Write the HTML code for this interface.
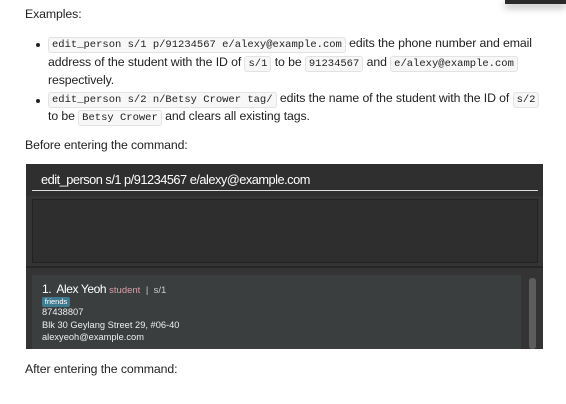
<!DOCTYPE html>
<html><head><style>
body{margin:0;width:566px;height:404px;background:#fff;font-family:"Liberation Sans",sans-serif;position:relative;overflow:hidden;color:#222}
.t{position:absolute;font-size:12.3px;white-space:nowrap;letter-spacing:-0.1px}
code{font-family:"Liberation Mono",monospace;font-size:10.5px;background:#f7f7f7;border:1px solid #e3e3e3;border-radius:3px;padding:1px 3px;color:#222;letter-spacing:0}
.dot{position:absolute;width:4px;height:4px;border-radius:50%;background:#222}
</style></head><body>
<div style="position:absolute;left:505px;top:0;width:61px;height:4px;background:#2a2a2a;box-shadow:0 3px 8px rgba(0,0,0,.4)"></div>
<div class="t" style="left:25px;top:7px">Examples:</div>
<div class="dot" style="left:36px;top:43px"></div>
<div class="t" style="left:48px;top:36px"><code>edit_person s/1 p/91234567 e/alexy@example.com</code> edits the phone number and email</div>
<div class="t" style="left:48px;top:55px">address of the student with the ID of <code>s/1</code> to be <code>91234567</code> and <code>e/alexy@example.com</code></div>
<div class="t" style="left:48px;top:73px">respectively.</div>
<div class="dot" style="left:36px;top:99px"></div>
<div class="t" style="left:48px;top:91px"><code>edit_person s/2 n/Betsy Crower tag/</code> edits the name of the student with the ID of <code>s/2</code></div>
<div class="t" style="left:48px;top:109px">to be <code>Betsy Crower</code> and clears all existing tags.</div>
<div class="t" style="left:25px;top:138px">Before entering the command:</div>

<div style="position:absolute;left:26px;top:164px;width:517px;height:185px;background:#343434"></div>
<div style="position:absolute;left:26px;top:164px;width:517px;height:32px;background:#2f2f2f"></div>
<div class="t" style="left:41px;top:172px;color:#fff;font-size:12.8px;letter-spacing:-0.5px">edit_person s/1 p/91234567 e/alexy@example.com</div>
<div style="position:absolute;left:32px;top:190px;width:506px;height:1px;background:#ddd"></div>
<div style="position:absolute;left:32px;top:199px;width:504px;height:62px;background:#2e2e2e;border:1px solid #222"></div>
<div style="position:absolute;left:26px;top:266px;width:517px;height:2px;background:#262626"></div>
<div style="position:absolute;left:32px;top:275px;width:489px;height:74px;background:#3b3e3f"></div>
<div style="position:absolute;left:529px;top:278px;width:7px;height:71px;background:#5d5d5d;border-radius:3px"></div>
<div class="t" style="left:42px;top:282px;color:#fff;font-size:12px;letter-spacing:-0.4px">1.&nbsp; Alex Yeoh <span style="color:#d8a0a8;font-size:9.5px;letter-spacing:0">student</span> <span style="color:#ccc;font-size:9.5px;letter-spacing:0">&nbsp;|&nbsp; s/1</span></div>
<div style="position:absolute;left:42px;top:297px;width:28px;height:10px;background:#3e7b91;border-radius:2px;color:#fff;font-size:7.5px;line-height:10px;text-align:center">friends</div>
<div class="t" style="left:42px;top:307px;color:#eee;font-size:9.3px;letter-spacing:0">87438807</div>
<div class="t" style="left:42px;top:320px;color:#eee;font-size:9.3px;letter-spacing:0">Blk 30 Geylang Street 29, #06-40</div>
<div class="t" style="left:42px;top:332px;color:#eee;font-size:9.3px;letter-spacing:0">alexyeoh@example.com</div>
<div class="t" style="left:25px;top:362px">After entering the command:</div>
</body></html>
